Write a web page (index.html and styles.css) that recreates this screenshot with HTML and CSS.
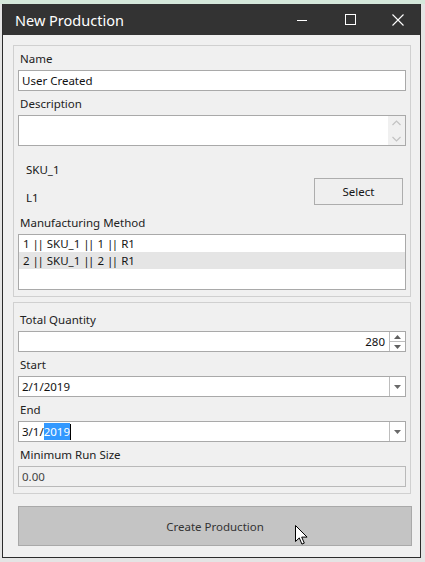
FILE: index.html
```html
<!DOCTYPE html>
<html>
<head>
    <title>New Production</title>
    <link rel="stylesheet" href="styles.css">
</head>
<body>
    <div class="window">
        <div class="titlebar">
            <span class="title">New Production</span>
            <div class="controls">
                <span class="ctl">
                    <svg width="10" height="10" viewBox="0 0 10 10"><path d="M0 5.5h10" stroke="#fff" stroke-width="1"/></svg>
                </span>
                <span class="ctl">
                    <svg width="11" height="11" viewBox="0 0 11 11"><rect x="0.5" y="0.5" width="10" height="10" fill="none" stroke="#fff" stroke-width="1"/></svg>
                </span>
                <span class="ctl">
                    <svg width="12" height="12" viewBox="0 0 12 12"><path d="M0.5 0.5l11 11M11.5 0.5l-11 11" stroke="#fff" stroke-width="1.1"/></svg>
                </span>
            </div>
        </div>

        <div class="content">
            <div class="group group-main">
                <div class="lbl">Name</div>
                <div class="txt">User Created</div>
                <div class="lbl">Description</div>
                <div class="memo">
                    <div class="memo-text"></div>
                    <div class="vscroll">
                        <svg width="9" height="6" viewBox="0 0 9 6"><path d="M0.5 5l4-4 4 4" fill="none" stroke="#c2c2c2" stroke-width="1.2"/></svg>
                        <svg width="9" height="6" viewBox="0 0 9 6"><path d="M0.5 1l4 4 4-4" fill="none" stroke="#c2c2c2" stroke-width="1.2"/></svg>
                    </div>
                </div>
                <div class="sku-row">
                    <div class="sku-info">
                        <div class="sku-line">SKU_1</div>
                        <div class="sku-line">L1</div>
                    </div>
                    <div class="btn-select">Select</div>
                </div>
                <div class="lbl">Manufacturing Method</div>
                <div class="listbox">
                    <div class="item">1 <span class="pipe">||</span> SKU_1 <span class="pipe">||</span> 1 <span class="pipe">||</span> R1</div>
                    <div class="item item-hover">2 <span class="pipe">||</span> SKU_1 <span class="pipe">||</span> 2 <span class="pipe">||</span> R1</div>
                </div>
            </div>

            <div class="group group-qty">
                <div class="lbl">Total Quantity</div>
                <div class="txt numeric">
                    <span class="num-value">280</span>
                    <div class="spin">
                        <div class="spin-btn"><svg width="7" height="4" viewBox="0 0 7 4"><path d="M0 4h7L3.5 0z" fill="#606060"/></svg></div>
                        <div class="spin-btn"><svg width="7" height="4" viewBox="0 0 7 4"><path d="M0 0h7L3.5 4z" fill="#606060"/></svg></div>
                    </div>
                </div>
                <div class="lbl">Start</div>
                <div class="txt combo">
                    <span class="combo-value">2/1/2019</span>
                    <div class="drop"><svg width="7" height="4" viewBox="0 0 7 4"><path d="M0 0h7L3.5 4z" fill="#6a6a6a"/></svg></div>
                </div>
                <div class="lbl">End</div>
                <div class="txt combo">
                    <span class="combo-value">3/1/<span class="selected">2019</span><span class="caret"></span></span>
                    <div class="drop"><svg width="7" height="4" viewBox="0 0 7 4"><path d="M0 0h7L3.5 4z" fill="#6a6a6a"/></svg></div>
                </div>
                <div class="lbl">Minimum Run Size</div>
                <div class="txt disabled">0.00</div>
            </div>

            <div class="btn-create">
                Create Production
                <svg class="cursor" width="13" height="20" viewBox="0 0 13 20">
                    <path d="M0.5 0.5v16l3.8-3.6 2.6 6.2 2.4-1-2.6-6h5.4z" fill="#fff" stroke="#000" stroke-width="1" stroke-linejoin="round"/>
                </svg>
            </div>
        </div>
    </div>
</body>
</html>
```

FILE: styles.css
```css
* {
    box-sizing: border-box;
}
body {
    margin: 0;
    height: 562px;
    overflow: hidden;
    background: linear-gradient(#d5e8db 0 4px, #e4e4e4 4px);
    font-family: "Noto Sans", "Open Sans", sans-serif;
    font-size: 11.5px;
    color: #151515;
}
.window {
    margin: 4px 0 0 2px;
    width: 419px;
    height: 554px;
    background: #f0f0f0;
    border: 1px solid #2b2b2b;
    border-top: 0;
    display: flex;
    flex-direction: column;
}
.titlebar {
    height: 31px;
    flex: none;
    background: #333333;
    color: #ffffff;
    display: flex;
    align-items: center;
    padding-left: 12px;
    overflow: hidden;
}
.title {
    font-size: 14.5px;
}
.controls {
    display: flex;
    margin-left: auto;
    margin-right: -2px;
    height: 100%;
}
.ctl {
    width: 48px;
    display: flex;
    align-items: center;
    justify-content: center;
}
.content {
    padding: 10px 9px 0 10px;
}
.group {
    width: 398px;
    border: 1px solid #d0d0d0;
    padding: 4px 4px 6px 4px;
}
.group-qty {
    margin-top: 5px;
    padding-top: 8px;
}
.lbl {
    height: 16px;
    line-height: 17px;
    padding-left: 2px;
    color: #222222;
}
.txt {
    height: 21px;
    margin: 4px 0;
    border: 1px solid #a9a9a9;
    background: #ffffff;
    padding-left: 3px;
    line-height: 19px;
    display: flex;
    color: #111111;
}
.group > .txt:last-child,
.group > .listbox:last-child {
    margin-bottom: 0;
}
.memo {
    height: 31px;
    margin-top: 4px;
    border: 1px solid #a9a9a9;
    background: #ffffff;
    display: flex;
}
.memo-text {
    flex: 1;
}
.vscroll {
    width: 17px;
    background: #f0f0f0;
    display: flex;
    flex-direction: column;
    align-items: center;
    justify-content: space-between;
    padding: 4px 0 3px;
}
.sku-row {
    height: 68px;
    display: flex;
    justify-content: space-between;
}
.sku-info {
    padding: 15px 0 0 8px;
}
.sku-line {
    height: 16px;
    line-height: 17px;
    margin-bottom: 12px;
}
.btn-select {
    width: 89px;
    height: 27px;
    margin: 32px 3px 0 0;
    border: 1px solid #adadad;
    background: #efefef;
    display: flex;
    align-items: center;
    justify-content: center;
}
.listbox {
    height: 56px;
    margin-top: 4px;
    border: 1px solid #a9a9a9;
    background: #ffffff;
}
.item {
    height: 17px;
    line-height: 17px;
    padding-left: 4px;
}
.pipe {
    letter-spacing: -1.5px;
    margin-right: 1.5px;
}
.item-hover {
    background: #e5e5e5;
}
.numeric {
    padding-left: 0;
    justify-content: flex-end;
}
.num-value {
    padding-right: 4px;
}
.spin {
    width: 16px;
    border-left: 1px solid #bdbdbd;
    display: flex;
    flex-direction: column;
}
.spin-btn {
    flex: 1;
    display: flex;
    align-items: center;
    justify-content: center;
}
.spin-btn + .spin-btn {
    border-top: 1px solid #bdbdbd;
}
.combo {
    justify-content: space-between;
}
.combo-value {
    display: flex;
    align-items: center;
}
.selected {
    background: #3399ff;
    color: #ffffff;
    line-height: 17px;
}
.caret {
    width: 1px;
    height: 16px;
    background: #000000;
}
.drop {
    width: 16px;
    border-left: 1px solid #bdbdbd;
    display: flex;
    align-items: center;
    justify-content: center;
}
.disabled {
    background: #f0f0f0;
    border-color: #b9b9b9;
    color: #444444;
}
.btn-create {
    position: relative;
    width: 394px;
    height: 40px;
    margin: 12px 0 0 5px;
    border: 1px solid #a9a9a9;
    background: #c4c4c4;
    color: #333333;
    display: flex;
    align-items: center;
    justify-content: center;
}
.cursor {
    position: absolute;
    left: 276px;
    top: 18px;
}
```
